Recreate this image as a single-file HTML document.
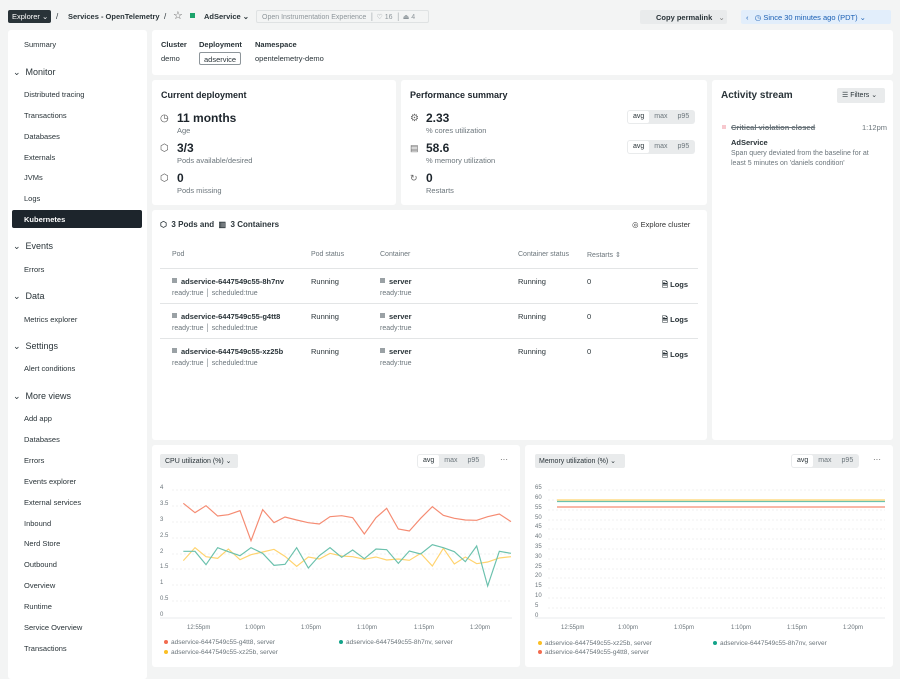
<!DOCTYPE html>
<html><head><meta charset="utf-8">
<style>
*{margin:0;padding:0;box-sizing:border-box}
body{width:900px;height:679px;background:#f3f4f4;font-family:"Liberation Sans",sans-serif;color:#293338;position:relative;overflow:hidden;font-size:8px}
.a{position:absolute;white-space:nowrap}
.p{position:absolute;background:#fff;border-radius:3px}
.sb{font-size:7.5px;color:#293338}
.sec{font-size:9px;color:#293338}
.h{font-weight:bold;font-size:9px;color:#1d252c}
.g{color:#6b757b}
.seg{position:absolute;display:flex;background:#e9ebec;border-radius:3px;padding:1px;font-size:7px;color:#6b757b;height:14px}
.seg span{padding:2px 5px 0}
.seg span:first-child{background:#fff;border-radius:2px;color:#293338}
.big{font-size:12px;font-weight:bold;color:#1d252c}
.sq{display:inline-block;width:5px;height:5px;background:#9aa1a5;margin-right:4px;vertical-align:1px}
</style></head><body>

<!-- top bar -->
<div class="a" style="left:8px;top:10px;width:43px;height:13px;background:#293338;border-radius:2px;color:#fff;font-size:7.5px;padding:2px 0 0 4px">Explorer ⌄</div>
<div class="a" style="left:56px;top:12px;font-size:8px">/</div>
<div class="a" style="left:68px;top:12px;font-size:7.5px;font-weight:bold">Services - OpenTelemetry</div>
<div class="a" style="left:164px;top:12px;font-size:8px">/</div>
<div class="a" style="left:173px;top:9px;font-size:11px;color:#555">☆</div>
<div class="a" style="left:190px;top:13px;width:5px;height:5px;background:#1ca36b"></div>
<div class="a" style="left:204px;top:12px;font-size:7.5px;font-weight:bold">AdService ⌄</div>
<div class="a" style="left:256px;top:10px;width:173px;height:13px;border:1px solid #dfe2e3;border-radius:2px;font-size:7px;color:#8d959a;padding:2px 0 0 5px">Open Instrumentation Experience &nbsp;│ ♡ 16 &nbsp;│ ⏏ 4</div>
<div class="a" style="left:640px;top:10px;width:87px;height:14px;background:#e9ebec;border-radius:2px;font-size:7.5px;font-weight:bold;padding:3px 0 0 16px">Copy permalink &nbsp;&nbsp;<span style="font-weight:normal;color:#777">⌄</span></div>
<div class="a" style="left:741px;top:10px;width:150px;height:14px;background:#e2eefb;border-radius:2px;font-size:7.5px;color:#1a5fb4;padding:3px 0 0 5px">‹ &nbsp;&nbsp;◷ Since 30 minutes ago (PDT) ⌄</div>

<!-- sidebar -->
<div class="p" style="left:8px;top:30px;width:139px;height:649px"></div>
<div class="a sb" style="left:24px;top:40px">Summary</div>
<div class="a sec" style="left:13px;top:67px">⌄&nbsp; Monitor</div>
<div class="a sb" style="left:24px;top:90px">Distributed tracing</div>
<div class="a sb" style="left:24px;top:111px">Transactions</div>
<div class="a sb" style="left:24px;top:132px">Databases</div>
<div class="a sb" style="left:24px;top:153px">Externals</div>
<div class="a sb" style="left:24px;top:173px">JVMs</div>
<div class="a sb" style="left:24px;top:194px">Logs</div>
<div class="a" style="left:12px;top:210px;width:130px;height:18px;background:#1d252c;border-radius:2px"></div>
<div class="a sb" style="left:24px;top:215px;color:#fff;font-weight:bold">Kubernetes</div>
<div class="a sec" style="left:13px;top:241px">⌄&nbsp; Events</div>
<div class="a sb" style="left:24px;top:265px">Errors</div>
<div class="a sec" style="left:13px;top:291px">⌄&nbsp; Data</div>
<div class="a sb" style="left:24px;top:315px">Metrics explorer</div>
<div class="a sec" style="left:13px;top:341px">⌄&nbsp; Settings</div>
<div class="a sb" style="left:24px;top:364px">Alert conditions</div>
<div class="a sec" style="left:13px;top:391px">⌄&nbsp; More views</div>
<div class="a sb" style="left:24px;top:414px">Add app</div>
<div class="a sb" style="left:24px;top:435px">Databases</div>
<div class="a sb" style="left:24px;top:456px">Errors</div>
<div class="a sb" style="left:24px;top:477px">Events explorer</div>
<div class="a sb" style="left:24px;top:498px">External services</div>
<div class="a sb" style="left:24px;top:519px">Inbound</div>
<div class="a sb" style="left:24px;top:539px">Nerd Store</div>
<div class="a sb" style="left:24px;top:560px">Outbound</div>
<div class="a sb" style="left:24px;top:581px">Overview</div>
<div class="a sb" style="left:24px;top:602px">Runtime</div>
<div class="a sb" style="left:24px;top:623px">Service Overview</div>
<div class="a sb" style="left:24px;top:644px">Transactions</div>

<!-- header panel -->
<div class="p" style="left:152px;top:30px;width:741px;height:45px"></div>
<div class="a" style="left:161px;top:40px;font-size:7.5px;font-weight:bold">Cluster</div>
<div class="a" style="left:199px;top:40px;font-size:7.5px;font-weight:bold">Deployment</div>
<div class="a" style="left:255px;top:40px;font-size:7.5px;font-weight:bold">Namespace</div>
<div class="a" style="left:161px;top:54px;font-size:7.5px">demo</div>
<div class="a" style="left:199px;top:52px;width:42px;height:13px;border:1px solid #8d959a;border-radius:2px;font-size:7.5px;padding:2px 0 0 4px">adservice</div>
<div class="a" style="left:255px;top:54px;font-size:7.5px">opentelemetry-demo</div>

<!-- current deployment -->
<div class="p" style="left:152px;top:80px;width:244px;height:125px"></div>
<div class="a h" style="left:161px;top:90px">Current deployment</div>
<div class="a" style="left:160px;top:113px;font-size:10px;color:#555">◷</div>
<div class="a big" style="left:177px;top:111px">11 months</div>
<div class="a g" style="left:177px;top:126px;font-size:7.5px">Age</div>
<div class="a" style="left:160px;top:143px;font-size:10px;color:#555">⬡</div>
<div class="a big" style="left:177px;top:141px">3/3</div>
<div class="a g" style="left:177px;top:156px;font-size:7.5px">Pods available/desired</div>
<div class="a" style="left:160px;top:173px;font-size:10px;color:#555">⬡</div>
<div class="a big" style="left:177px;top:171px">0</div>
<div class="a g" style="left:177px;top:186px;font-size:7.5px">Pods missing</div>

<!-- performance -->
<div class="p" style="left:401px;top:80px;width:306px;height:125px"></div>
<div class="a h" style="left:410px;top:90px">Performance summary</div>
<div class="a" style="left:410px;top:113px;font-size:10px;color:#666">⚙</div>
<div class="a big" style="left:426px;top:111px">2.33</div>
<div class="a g" style="left:426px;top:126px;font-size:7.5px">% cores utilization</div>
<div class="seg" style="left:627px;top:110px"><span>avg</span><span>max</span><span>p95</span></div>
<div class="a" style="left:410px;top:143px;font-size:9px;color:#666">▤</div>
<div class="a big" style="left:426px;top:141px">58.6</div>
<div class="a g" style="left:426px;top:156px;font-size:7.5px">% memory utilization</div>
<div class="seg" style="left:627px;top:140px"><span>avg</span><span>max</span><span>p95</span></div>
<div class="a" style="left:410px;top:173px;font-size:9px;color:#666">↻</div>
<div class="a big" style="left:426px;top:171px">0</div>
<div class="a g" style="left:426px;top:186px;font-size:7.5px">Restarts</div>

<!-- activity -->
<div class="p" style="left:712px;top:80px;width:181px;height:360px"></div>
<div class="a" style="left:721px;top:90px;font-size:10px;font-weight:bold">Activity stream</div>
<div class="a" style="left:837px;top:88px;width:48px;height:15px;background:#e9ebec;border-radius:2px;font-size:7px;padding:3px 0 0 5px">☰ Filters ⌄</div>
<div class="a" style="left:722px;top:125px;width:4px;height:4px;background:#f7c8ce"></div>
<div class="a" style="left:731px;top:123px;font-size:7.5px;text-decoration:line-through;color:#6b757b;font-weight:bold">Critical violation closed</div>
<div class="a g" style="left:862px;top:123px;font-size:7.5px">1:12pm</div>
<div class="a" style="left:731px;top:138px;font-size:7.5px;font-weight:bold">AdService</div>
<div class="a g" style="left:731px;top:149px;font-size:7px;line-height:10px;white-space:normal;width:150px">Span query deviated from the baseline for at least 5 minutes on 'daniels condition'</div>

<!-- pods table -->
<div class="p" style="left:152px;top:210px;width:555px;height:230px"></div>
<div class="a" style="left:160px;top:220px;font-size:8px;font-weight:bold">⬡ &nbsp;3 Pods and &nbsp;▥ &nbsp;3 Containers</div>
<div class="a" style="left:632px;top:220px;font-size:7.5px;color:#333">◎ Explore cluster</div>
<div class="a g" style="left:172px;top:251px;font-size:7px">Pod</div>
<div class="a g" style="left:311px;top:251px;font-size:7px">Pod status</div>
<div class="a g" style="left:380px;top:251px;font-size:7px">Container</div>
<div class="a g" style="left:518px;top:251px;font-size:7px">Container status</div>
<div class="a g" style="left:587px;top:251px;font-size:7px">Restarts ⇕</div>
<div class="a" style="left:160px;top:268px;width:538px;height:1px;background:#e3e5e6"></div>
<div class="a" style="left:160px;top:303px;width:538px;height:1px;background:#e3e5e6"></div>
<div class="a" style="left:160px;top:338px;width:538px;height:1px;background:#e3e5e6"></div>

<div class="a" style="left:172px;top:277px;font-size:7.5px;font-weight:bold"><span class="sq"></span>adservice-6447549c55-8h7nv</div>
<div class="a g" style="left:172px;top:290px;font-size:7px">ready:true │ scheduled:true</div>
<div class="a" style="left:311px;top:277px;font-size:7.5px">Running</div>
<div class="a" style="left:380px;top:277px;font-size:7.5px;font-weight:bold"><span class="sq"></span>server</div>
<div class="a g" style="left:380px;top:290px;font-size:7px">ready:true</div>
<div class="a" style="left:518px;top:277px;font-size:7.5px">Running</div>
<div class="a" style="left:587px;top:277px;font-size:7.5px">0</div>
<div class="a" style="left:662px;top:279px;font-size:7.5px;font-weight:bold">🗎 Logs</div>

<div class="a" style="left:172px;top:312px;font-size:7.5px;font-weight:bold"><span class="sq"></span>adservice-6447549c55-g4tt8</div>
<div class="a g" style="left:172px;top:325px;font-size:7px">ready:true │ scheduled:true</div>
<div class="a" style="left:311px;top:312px;font-size:7.5px">Running</div>
<div class="a" style="left:380px;top:312px;font-size:7.5px;font-weight:bold"><span class="sq"></span>server</div>
<div class="a g" style="left:380px;top:325px;font-size:7px">ready:true</div>
<div class="a" style="left:518px;top:312px;font-size:7.5px">Running</div>
<div class="a" style="left:587px;top:312px;font-size:7.5px">0</div>
<div class="a" style="left:662px;top:314px;font-size:7.5px;font-weight:bold">🗎 Logs</div>

<div class="a" style="left:172px;top:347px;font-size:7.5px;font-weight:bold"><span class="sq"></span>adservice-6447549c55-xz25b</div>
<div class="a g" style="left:172px;top:360px;font-size:7px">ready:true │ scheduled:true</div>
<div class="a" style="left:311px;top:347px;font-size:7.5px">Running</div>
<div class="a" style="left:380px;top:347px;font-size:7.5px;font-weight:bold"><span class="sq"></span>server</div>
<div class="a g" style="left:380px;top:360px;font-size:7px">ready:true</div>
<div class="a" style="left:518px;top:347px;font-size:7.5px">Running</div>
<div class="a" style="left:587px;top:347px;font-size:7.5px">0</div>
<div class="a" style="left:662px;top:349px;font-size:7.5px;font-weight:bold">🗎 Logs</div>

<!-- CPU chart -->
<div class="p" style="left:152px;top:445px;width:368px;height:222px"></div>
<div class="a" style="left:160px;top:454px;width:78px;height:14px;background:#e9ebec;border-radius:2px;font-size:7px;padding:3px 0 0 5px">CPU utilization (%) ⌄</div>
<div class="seg" style="left:417px;top:454px"><span>avg</span><span>max</span><span>p95</span></div>
<div class="a" style="left:500px;top:455px;font-size:8px;color:#555">···</div>
<svg class="a" style="left:0;top:0" width="900" height="679">
<g font-family="Liberation Sans" font-size="6" fill="#6b757b">
<text x="160" y="489">4</text><text x="160" y="505">3.5</text><text x="160" y="521">3</text><text x="160" y="537">2.5</text><text x="160" y="553">2</text><text x="160" y="568">1.5</text><text x="160" y="584">1</text><text x="160" y="600">0.5</text><text x="160" y="616">0</text>
<text x="187" y="629">12:55pm</text><text x="245" y="629">1:00pm</text><text x="301" y="629">1:05pm</text><text x="357" y="629">1:10pm</text><text x="414" y="629">1:15pm</text><text x="470" y="629">1:20pm</text>
</g>
<g stroke="#e3e5e6" stroke-width="0.6" stroke-dasharray="2,2">
<line x1="172" x2="512" y1="490" y2="490"/><line x1="172" x2="512" y1="506" y2="506"/><line x1="172" x2="512" y1="522" y2="522"/><line x1="172" x2="512" y1="538" y2="538"/><line x1="172" x2="512" y1="554" y2="554"/><line x1="172" x2="512" y1="569" y2="569"/><line x1="172" x2="512" y1="585" y2="585"/><line x1="172" x2="512" y1="601" y2="601"/>
</g>
<line x1="160" x2="512" y1="618" y2="618" stroke="#e3e5e6" stroke-width="0.8"/>
<g transform="translate(150,440) scale(0.33333)" fill="none" stroke-width="3.5">
<polyline stroke="#f58b72" points="100,190 135,218 168,197 203,228 235,224 270,212 303,302 338,209 372,248 405,231 440,240 475,248 508,252 540,230 575,227 608,233 643,282 678,233 710,205 745,267 778,273 812,235 847,200 880,226 913,235 946,240 980,241 1013,230 1048,222 1083,245"/>
<polyline stroke="#ffd36e" points="100,362 135,323 168,350 203,355 235,327 270,359 303,344 338,336 372,328 405,349 440,379 475,351 508,357 540,340 575,348 608,350 643,358 678,351 710,360 745,357 778,361 812,340 847,378 880,325 913,372 946,351 980,371 1013,366 1048,354 1083,350"/>
<polyline stroke="#6bc1ad" points="100,334 135,334 168,374 203,323 235,335 270,347 303,323 338,340 372,376 405,373 440,323 475,384 508,347 540,323 575,352 608,330 643,356 678,327 710,329 745,370 778,333 812,342 847,314 880,323 913,335 946,365 980,318 1013,438 1048,334 1083,340"/>
</g>
<g font-family="Liberation Sans" font-size="6.5" fill="#6b757b">
<circle cx="166" cy="642" r="2" fill="#f26b4f"/><text x="171" y="644">adservice-6447549c55-g4tt8, server</text>
<circle cx="341" cy="642" r="2" fill="#13a389"/><text x="346" y="644">adservice-6447549c55-8h7nv, server</text>
<circle cx="166" cy="652" r="2" fill="#fbbf24"/><text x="171" y="654">adservice-6447549c55-xz25b, server</text>
</g>

<!-- memory chart axes -->
<g font-family="Liberation Sans" font-size="6" fill="#6b757b">
<text x="535" y="489">65</text><text x="535" y="499">60</text><text x="535" y="509">55</text><text x="535" y="519">50</text><text x="535" y="528">45</text><text x="535" y="538">40</text><text x="535" y="548">35</text><text x="535" y="558">30</text><text x="535" y="568">25</text><text x="535" y="577">20</text><text x="535" y="587">15</text><text x="535" y="597">10</text><text x="535" y="607">5</text><text x="535" y="617">0</text>
<text x="561" y="629">12:55pm</text><text x="618" y="629">1:00pm</text><text x="674" y="629">1:05pm</text><text x="731" y="629">1:10pm</text><text x="787" y="629">1:15pm</text><text x="843" y="629">1:20pm</text>
</g>
<g stroke="#e3e5e6" stroke-width="0.6" stroke-dasharray="2,2">
<line x1="548" x2="885" y1="490" y2="490"/><line x1="548" x2="885" y1="500" y2="500"/><line x1="548" x2="885" y1="510" y2="510"/><line x1="548" x2="885" y1="520" y2="520"/><line x1="548" x2="885" y1="529" y2="529"/><line x1="548" x2="885" y1="539" y2="539"/><line x1="548" x2="885" y1="549" y2="549"/><line x1="548" x2="885" y1="559" y2="559"/><line x1="548" x2="885" y1="569" y2="569"/><line x1="548" x2="885" y1="578" y2="578"/><line x1="548" x2="885" y1="588" y2="588"/><line x1="548" x2="885" y1="598" y2="598"/><line x1="548" x2="885" y1="608" y2="608"/>
</g>
<line x1="535" x2="885" y1="618" y2="618" stroke="#e3e5e6" stroke-width="0.8"/>
</svg>

<!-- Memory chart -->
<div class="p" style="left:525px;top:445px;width:368px;height:222px;z-index:-1"></div>
<div class="a" style="left:535px;top:454px;width:90px;height:14px;background:#e9ebec;border-radius:2px;font-size:7px;padding:3px 0 0 4px">Memory utilization (%) ⌄</div>
<div class="seg" style="left:791px;top:454px"><span>avg</span><span>max</span><span>p95</span></div>
<div class="a" style="left:873px;top:455px;font-size:8px;color:#555">···</div>
<svg class="a" style="left:0;top:0" width="900" height="679">
<line x1="557" x2="885" y1="500" y2="500" stroke="#ffd36e" stroke-width="1.2"/>
<line x1="557" x2="885" y1="501.5" y2="501.5" stroke="#6bc1ad" stroke-width="1.2"/>
<line x1="557" x2="885" y1="507" y2="507" stroke="#f58b72" stroke-width="1.2"/>
<g font-family="Liberation Sans" font-size="6.5" fill="#6b757b">
<circle cx="540" cy="643" r="2" fill="#fbbf24"/><text x="545" y="645">adservice-6447549c55-xz25b, server</text>
<circle cx="715" cy="643" r="2" fill="#13a389"/><text x="720" y="645">adservice-6447549c55-8h7nv, server</text>
<circle cx="540" cy="652" r="2" fill="#f26b4f"/><text x="545" y="654">adservice-6447549c55-g4tt8, server</text>
</g>
</svg>
</body></html>
